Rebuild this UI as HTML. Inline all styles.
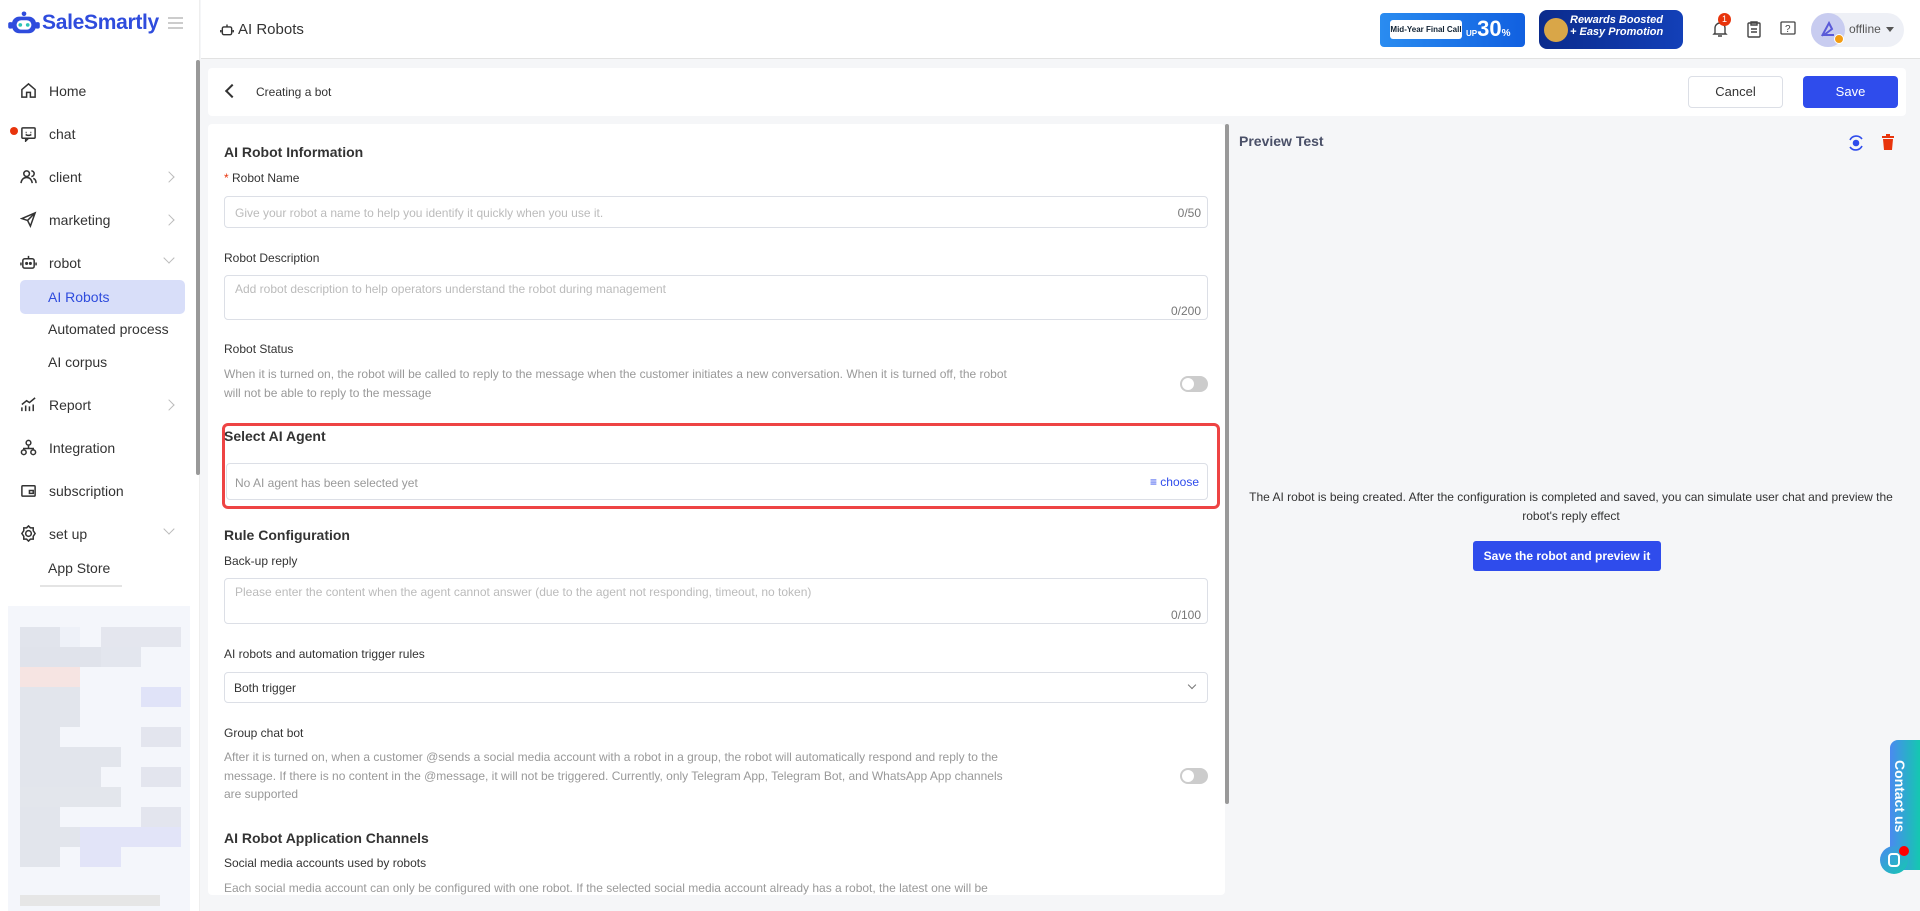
<!DOCTYPE html>
<html><head><meta charset="utf-8"><style>
*{box-sizing:border-box;margin:0;padding:0}
body{width:1920px;height:911px;overflow:hidden;font-family:"Liberation Sans",Arial,sans-serif;background:#f5f6f8;position:relative;color:#333}
.a{position:absolute}
.side{left:0;top:0;width:200px;height:911px;background:#fff;border-right:1px solid #eee}
.nav{position:absolute;left:20px;font-size:14px;color:#333;display:flex;align-items:center;gap:12px}
.nav svg{width:17px;height:17px;stroke:#333;fill:none;stroke-width:1.6}
.chev{position:absolute;left:165px;width:8px;height:8px;border-right:1.5px solid #bbb;border-bottom:1.5px solid #bbb}
.sub{position:absolute;left:48px;font-size:14px;color:#333}
.lbl{position:absolute;left:224px;font-size:12px;color:#333}
.h{position:absolute;left:224px;font-size:14px;font-weight:bold;color:#333}
.inp{position:absolute;left:224px;width:984px;border:1px solid #dcdfe6;border-radius:4px;background:#fff}
.ph{position:absolute;left:10px;font-size:12px;color:#bbb}
.cnt{position:absolute;right:6px;font-size:12px;color:#777}
.desc{position:absolute;left:224px;width:790px;font-size:12px;line-height:18.5px;color:#999}
.tog{position:absolute;left:1180px;width:28px;height:16px;border-radius:8px;background:#ccc}
.tog:after{content:"";position:absolute;left:2px;top:2px;width:12px;height:12px;border-radius:50%;background:#fff}
</style></head><body>
<div class="a side"></div>
<svg class="a" style="left:8px;top:11px" width="32" height="26" viewBox="0 0 34 28"><rect x="4" y="6" width="26" height="18" rx="8" fill="#2f4cdd"/><rect x="0" y="12" width="5" height="7" rx="2" fill="#2f4cdd"/><rect x="29" y="12" width="5" height="7" rx="2" fill="#2f4cdd"/><circle cx="17" cy="3" r="2.5" fill="#2f4cdd"/><rect x="9" y="10" width="16" height="10" rx="5" fill="#fff"/><circle cx="13" cy="15" r="2" fill="#2ec4b6"/><circle cx="21" cy="15" r="2" fill="#2ec4b6"/></svg>
<div class="a" style="left:42px;top:11px;font-size:21px;font-weight:bold;color:#2f4cdd;letter-spacing:-0.3px">SaleSmartly</div>
<div class="a" style="left:168px;top:17px;width:15px;height:2px;background:#ccc;box-shadow:0 5px 0 #ccc,0 10px 0 #ccc"></div>
<div class="a" style="left:196px;top:60px;width:4px;height:415px;background:#999;border-radius:2px"></div>

<div class="nav" style="top:82px"><svg viewBox="0 0 18 18"><path d="M2 8L9 2l7 6v8H11v-5H7v5H2z"/></svg>Home</div>
<div class="a" style="left:10px;top:127px;width:8px;height:8px;border-radius:50%;background:#e8340c"></div>
<div class="nav" style="top:125px"><svg viewBox="0 0 18 18"><rect x="2" y="3" width="14" height="11" rx="1"/><path d="M6 14v3l3-3M6 8h1M11 8h1M6 10q3 2 6 0"/></svg>chat</div>
<div class="nav" style="top:168px"><svg viewBox="0 0 18 18"><circle cx="7" cy="6" r="3"/><path d="M1 16q1-6 6-6t6 6M12 3a3 3 0 010 6M14 11q3 1 3 5"/></svg>client</div><div class="chev" style="top:173px;transform:rotate(-45deg)"></div>
<div class="nav" style="top:211px"><svg viewBox="0 0 18 18"><path d="M2 8L16 2 11 16 8 10zM8 10l8-8"/></svg>marketing</div><div class="chev" style="top:216px;transform:rotate(-45deg)"></div>
<div class="nav" style="top:254px"><svg viewBox="0 0 18 18"><rect x="3" y="5" width="12" height="10" rx="2"/><path d="M9 5V2M1 9v3M17 9v3"/><circle cx="7" cy="10" r=".8"/><circle cx="11" cy="10" r=".8"/></svg>robot</div><div class="chev" style="top:254px;transform:rotate(45deg)"></div>
<div class="a" style="left:20px;top:280px;width:165px;height:34px;background:#d8def9;border-radius:5px"></div>
<div class="sub" style="top:289px;color:#2f4cdd">AI Robots</div>
<div class="sub" style="top:321px">Automated process</div>
<div class="sub" style="top:354px">AI corpus</div>
<div class="nav" style="top:396px"><svg viewBox="0 0 18 18"><path d="M2 16v-4M6 16v-6M10 16v-5M14 16V9M2 9l5-4 3 2 6-5"/></svg>Report</div><div class="chev" style="top:401px;transform:rotate(-45deg)"></div>
<div class="nav" style="top:439px"><svg viewBox="0 0 18 18"><circle cx="9" cy="4" r="2.5"/><circle cx="4" cy="14" r="2.5"/><circle cx="14" cy="14" r="2.5"/><path d="M9 7v3M4 11V10h10v1"/></svg>Integration</div>
<div class="nav" style="top:482px"><svg viewBox="0 0 18 18"><rect x="2" y="4" width="14" height="11" rx="1"/><path d="M10 9h4v3h-4z"/></svg>subscription</div>
<div class="nav" style="top:525px"><svg viewBox="0 0 18 18"><circle cx="9" cy="9" r="3"/><path d="M9 1l2 2h3v3l2 3-2 3v3h-3l-2 2-2-2H4v-3L2 9l2-3V3h3z"/></svg>set up</div><div class="chev" style="top:525px;transform:rotate(45deg)"></div>
<div class="sub" style="top:560px">App Store</div>
<div class="a" style="left:40px;top:585px;width:82px;height:2px;background:#e4e4e4"></div>
<div class="a" style="left:8px;top:606px;width:182px;height:305px;background:#f4f6fb"></div>
<div class="a" style="left:20px;top:627px;width:161px;height:260px;display:grid;grid-template-columns:repeat(8,1fr);grid-template-rows:repeat(13,1fr)">
<div style="grid-column:1/3;background:#e1e4ec"></div><div style="background:#eef1f8"></div><div></div><div style="grid-column:5/9;background:#e4e6ee"></div>
<div style="grid-column:1/5;background:#e0e3eb"></div><div style="grid-column:5/7;background:#e3e6ee"></div><div></div><div></div>
<div style="grid-column:1/4;background:#f6e4e2"></div><div></div><div></div><div></div><div></div><div></div>
<div style="grid-column:1/4;background:#e2e5ec"></div><div></div><div></div><div></div><div style="grid-column:7/9;background:#e0e3f8"></div>
<div style="grid-column:1/4;background:#e2e5ec"></div><div></div><div></div><div></div><div></div><div></div>
<div style="grid-column:1/3;background:#e2e5ec"></div><div></div><div></div><div></div><div></div><div style="grid-column:7/9;background:#e3e5ee"></div>
<div style="grid-column:1/6;background:#e2e5ec"></div><div></div><div></div><div></div>
<div style="grid-column:1/5;background:#e2e5ec"></div><div></div><div></div><div style="grid-column:7/9;background:#e3e5ee"></div>
<div style="grid-column:1/6;background:#e3e6ec"></div><div></div><div></div><div></div>
<div style="grid-column:1/3;background:#e2e5ec"></div><div></div><div></div><div></div><div></div><div style="grid-column:7/9;background:#e3e5ee"></div>
<div style="grid-column:1/4;background:#e2e5ec"></div><div style="grid-column:4/9;background:#e2e4f8"></div>
<div style="grid-column:1/3;background:#e2e5ec"></div><div></div><div style="grid-column:4/6;background:#e2e4f8"></div><div></div><div></div><div></div>
</div>
<div class="a" style="left:20px;top:895px;width:140px;height:11px;background:#e6e6e6"></div>

<div class="a" style="left:201px;top:0;width:1719px;height:59px;background:#fff;border-bottom:1px solid #e2e2e2"></div>
<svg class="a" style="left:220px;top:23px" width="14" height="14" viewBox="0 0 18 18" fill="none" stroke="#333" stroke-width="1.8"><rect x="3" y="5" width="12" height="10" rx="2"/><path d="M9 5V2M1 9v3M17 9v3"/></svg>
<div class="a" style="left:238px;top:21px;font-size:15px;color:#333">AI Robots</div>
<div class="a" style="left:1380px;top:13px;width:145px;height:34px;border-radius:4px;background:linear-gradient(90deg,#2a8cf0,#1160e0)"></div>
<div class="a" style="left:1390px;top:20px;width:72px;height:19px;background:#fff;border-radius:3px;font-size:8px;font-weight:bold;color:#123;line-height:19px;text-align:center;white-space:nowrap">Mid-Year Final Call</div>
<div class="a" style="left:1466px;top:16px;font-size:22px;font-weight:bold;color:#fff"><span style="font-size:8px">UP</span>30<span style="font-size:10px">%</span></div>
<div class="a" style="left:1539px;top:10px;width:144px;height:39px;border-radius:8px;background:linear-gradient(90deg,#0b2b8c,#1340b8)"></div>
<div class="a" style="left:1544px;top:18px;width:24px;height:24px;border-radius:50%;background:#d9a648"></div>
<div class="a" style="left:1570px;top:14px;font-size:11px;font-weight:bold;font-style:italic;color:#fff;line-height:12px">Rewards Boosted<br>+ Easy Promotion</div>
<svg class="a" style="left:1712px;top:20px" width="16" height="18" viewBox="0 0 16 18" fill="none" stroke="#444" stroke-width="1.4"><path d="M3 13V8a5 5 0 0110 0v5l1 1H2zM6 16h4"/></svg>
<div class="a" style="left:1718px;top:13px;width:13px;height:13px;border-radius:50%;background:#e8340c;color:#fff;font-size:9px;text-align:center;line-height:13px">1</div>
<svg class="a" style="left:1747px;top:20px" width="14" height="18" viewBox="0 0 14 18" fill="none" stroke="#444" stroke-width="1.4"><rect x="1" y="3" width="12" height="14" rx="1"/><path d="M4 2h6v3H4zM4 9h6M4 12h6"/></svg>
<svg class="a" style="left:1780px;top:21px" width="16" height="16" viewBox="0 0 16 16" fill="none" stroke="#444" stroke-width="1.3"><rect x="1" y="1" width="14" height="12" rx="1"/><text x="5" y="11" font-size="10" fill="#444" stroke="none" font-family="Liberation Sans">?</text></svg>
<div class="a" style="left:1811px;top:13px;width:93px;height:34px;border-radius:17px;background:#eef0f6"></div>
<div class="a" style="left:1811px;top:13px;width:34px;height:34px;border-radius:50%;background:#c8ccf0"></div>
<svg class="a" style="left:1818px;top:20px" width="20" height="20" viewBox="0 0 20 20" fill="none" stroke="#5a5ad8" stroke-width="2"><path d="M4 16L11 3l3 6-8 6h10"/></svg>
<div class="a" style="left:1834px;top:34px;width:10px;height:10px;border-radius:50%;background:#f39c12;border:1px solid #fff"></div>
<div class="a" style="left:1849px;top:22px;font-size:12px;color:#555">offline</div>
<div class="a" style="left:1886px;top:27px;border:4px solid transparent;border-top:5px solid #555"></div>

<div class="a" style="left:208px;top:68px;width:1698px;height:48px;background:#fff;border-radius:4px"></div>
<div class="a" style="left:227px;top:86px;width:10px;height:10px;border-left:2px solid #333;border-bottom:2px solid #333;transform:rotate(45deg)"></div>
<div class="a" style="left:256px;top:85px;font-size:12px;color:#333">Creating a bot</div>
<div class="a" style="left:1688px;top:76px;width:95px;height:32px;border:1px solid #dcdfe6;border-radius:4px;background:#fff;font-size:13px;color:#333;text-align:center;line-height:30px">Cancel</div>
<div class="a" style="left:1803px;top:76px;width:95px;height:32px;border-radius:4px;background:#2f4cec;font-size:13px;color:#fff;text-align:center;line-height:32px">Save</div>

<div class="a" style="left:208px;top:124px;width:1017px;height:771px;background:#fff;border-radius:4px"></div>
<div class="a" style="left:1225px;top:124px;width:4px;height:680px;background:#999;border-radius:2px"></div>
<div class="h" style="top:144px">AI Robot Information</div>
<div class="lbl" style="top:171px"><span style="color:#e8340c">*</span> Robot Name</div>
<div class="inp" style="top:196px;height:32px"><span class="ph" style="top:9px">Give your robot a name to help you identify it quickly when you use it.</span><span class="cnt" style="top:9px">0/50</span></div>
<div class="lbl" style="top:251px">Robot Description</div>
<div class="inp" style="top:275px;height:45px"><span class="ph" style="top:6px">Add robot description to help operators understand the robot during management</span><span class="cnt" style="top:28px">0/200</span></div>
<div class="lbl" style="top:342px">Robot Status</div>
<div class="desc" style="top:365px">When it is turned on, the robot will be called to reply to the message when the customer initiates a new conversation. When it is turned off, the robot will not be able to reply to the message</div>
<div class="tog" style="top:376px"></div>
<div class="a" style="left:222px;top:423px;width:998px;height:86px;border:3px solid #ee4444;border-radius:6px"></div>
<div class="h" style="top:428px;font-size:14px">Select AI Agent</div>
<div class="inp" style="left:226px;width:982px;top:463px;height:37px"><span class="ph" style="top:12px;left:8px;color:#999">No AI agent has been selected yet</span><span style="position:absolute;right:8px;top:11px;font-size:12px;color:#2f4cec">&#8801; choose</span></div>
<div class="h" style="top:527px">Rule Configuration</div>
<div class="lbl" style="top:554px">Back-up reply</div>
<div class="inp" style="top:578px;height:46px"><span class="ph" style="top:6px">Please enter the content when the agent cannot answer (due to the agent not responding, timeout, no token)</span><span class="cnt" style="top:29px">0/100</span></div>
<div class="lbl" style="top:647px">AI robots and automation trigger rules</div>
<div class="inp" style="top:672px;height:31px"><span style="position:absolute;left:9px;top:8px;font-size:12px;color:#333">Both trigger</span><span style="position:absolute;right:12px;top:9px;width:6px;height:6px;border-right:1.3px solid #777;border-bottom:1.3px solid #777;transform:rotate(45deg)"></span></div>
<div class="lbl" style="top:726px">Group chat bot</div>
<div class="desc" style="top:748px">After it is turned on, when a customer @sends a social media account with a robot in a group, the robot will automatically respond and reply to the message. If there is no content in the @message, it will not be triggered. Currently, only Telegram App, Telegram Bot, and WhatsApp App channels are supported</div>
<div class="tog" style="top:768px"></div>
<div class="h" style="top:830px">AI Robot Application Channels</div>
<div class="lbl" style="top:856px">Social media accounts used by robots</div>
<div class="desc" style="top:879px;width:820px">Each social media account can only be configured with one robot. If the selected social media account already has a robot, the latest one will be</div>

<div class="a" style="left:1239px;top:133px;font-size:14px;font-weight:bold;color:#4a5068">Preview Test</div>
<svg class="a" style="left:1847px;top:134px" width="18" height="18" viewBox="0 0 18 18" fill="none" stroke="#2f4cec" stroke-width="1.6"><path d="M3 6a7 7 0 0112-1M15 12a7 7 0 01-12 1"/><circle cx="9" cy="9" r="2.5" fill="#2f4cec"/></svg>
<svg class="a" style="left:1882px;top:134px" width="12" height="16" viewBox="0 0 12 16"><rect x="0" y="2" width="12" height="2" fill="#e8340c"/><rect x="4" y="0" width="4" height="2" fill="#e8340c"/><path d="M1 5h10l-1 11H2z" fill="#e8340c"/></svg>
<div class="a" style="left:1236px;top:488px;width:670px;text-align:center;font-size:12px;line-height:18.5px;color:#333">The AI robot is being created. After the configuration is completed and saved, you can simulate user chat and preview the robot's reply effect</div>
<div class="a" style="left:1473px;top:541px;width:188px;height:30px;border-radius:3px;background:#2f4cec;color:#fff;font-size:12px;font-weight:bold;text-align:center;line-height:30px">Save the robot and preview it</div>

<div class="a" style="left:1890px;top:740px;width:30px;height:130px;border-radius:8px 0 0 0;background:linear-gradient(90deg,#4a8af0,#14c8b0)"></div>
<div class="a" style="left:1892px;top:760px;font-size:14px;font-weight:bold;color:#fff;writing-mode:vertical-rl">Contact us</div>
<div class="a" style="left:1880px;top:846px;width:28px;height:28px;border-radius:50%;background:linear-gradient(135deg,#4a8af0,#14c8b0)"></div>
<div class="a" style="left:1888px;top:853px;width:12px;height:14px;border:2px solid #fff;border-radius:4px"></div>
<div class="a" style="left:1899px;top:846px;width:10px;height:10px;border-radius:50%;background:#f00"></div>
</body></html>
